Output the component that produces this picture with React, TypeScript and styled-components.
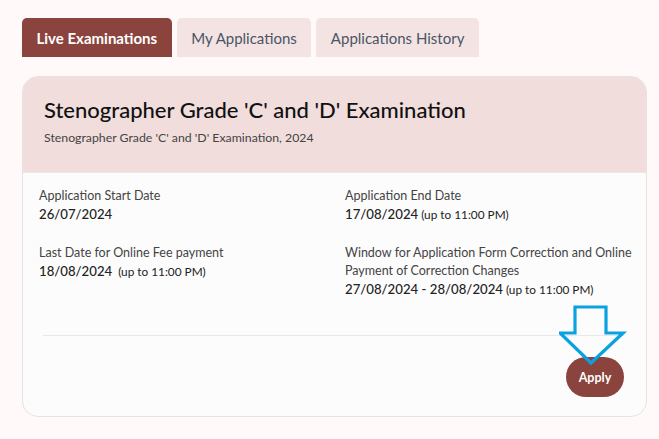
import React from "react";
import styled, { createGlobalStyle } from "styled-components";

const Global = createGlobalStyle`
  html, body { margin: 0; padding: 0; background: #fffaf9; }
  body { font-family: Lato, "Open Sans", sans-serif; }
  * { box-sizing: border-box; }
`;

const Page = styled.div`
  padding: 18px 12px 0 22px;
  width: 659px;
  height: 439px;
`;

const Tabs = styled.div`
  display: flex;
  gap: 5px;
  margin-bottom: 19px;
`;

const Tab = styled.div<{ $active?: boolean }>`
  height: 39px;
  padding: 0 14.5px;
  display: flex;
  align-items: center;
  border-radius: 5px 5px 0 0;
  font-size: 15px;
  font-weight: ${(p) => (p.$active ? 700 : 400)};
  color: ${(p) => (p.$active ? "#ffffff" : "#4b5565")};
  background: ${(p) => (p.$active ? "#8b433e" : "#f3e4e3")};
  white-space: nowrap;
`;

const Card = styled.div`
  width: 625px;
  height: 341px;
  border: 1px solid #e6e3e3;
  border-radius: 16px;
  background: #fcfcfc;
  overflow: hidden;
  display: flex;
  flex-direction: column;
`;

const Header = styled.div`
  background: #f0dddc;
  padding: 19px 21px 0;
  height: 96px;
  border-bottom: 1px solid #eee6e6;
`;

const Title = styled.h1`
  margin: 0;
  font-size: 22px;
  font-weight: 500;
  color: #111;
  line-height: 28px;
`;

const Subtitle = styled.div`
  margin-top: 6px;
  font-size: 12.3px;
  color: #444;
`;

const Body = styled.div`
  padding: 14px 10px 0 16px;
  display: grid;
  grid-template-columns: 306px 1fr;
  row-gap: 20px;
`;

const Field = styled.div``;

const Label = styled.div`
  font-size: 12.5px;
  color: #444;
  line-height: 18px;
  white-space: nowrap;
`;

const Value = styled.div`
  font-size: 13.2px;
  font-weight: 500;
  color: #222;
  line-height: 18px;
  white-space: nowrap;
`;

const Note = styled.span<{ $gap?: boolean }>`
  font-size: 11.8px;
  font-weight: 400;
  margin-left: ${(p) => (p.$gap ? 6 : 3)}px;
`;

const Divider = styled.hr`
  margin: 36px 22px 0 20px;
  border: none;
  border-top: 1px solid #e8e8e8;
`;

const Footer = styled.div`
  display: flex;
  justify-content: flex-end;
  padding: 21px 22px 0 0;
`;

const ApplyWrap = styled.div`
  position: relative;
`;

const ApplyButton = styled.button`
  width: 58px;
  height: 40px;
  border: none;
  border-radius: 20px;
  background: #8b433e;
  color: #fff;
  font-family: inherit;
  font-weight: 700;
  font-size: 12.5px;
  padding: 0;
`;

const Arrow = styled.svg`
  position: absolute;
  left: -7px;
  top: -52px;
  pointer-events: none;
`;

export default function App() {
  return (
    <>
      <Global />
      <Page>
        <Tabs>
          <Tab $active>Live Examinations</Tab>
          <Tab>My Applications</Tab>
          <Tab>Applications History</Tab>
        </Tabs>
        <Card>
          <Header>
            <Title>Stenographer Grade 'C' and 'D' Examination</Title>
            <Subtitle>Stenographer Grade 'C' and 'D' Examination, 2024</Subtitle>
          </Header>
          <Body>
            <Field>
              <Label>Application Start Date</Label>
              <Value>26/07/2024</Value>
            </Field>
            <Field>
              <Label>Application End Date</Label>
              <Value>
                17/08/2024<Note>(up to 11:00 PM)</Note>
              </Value>
            </Field>
            <Field>
              <Label>Last Date for Online Fee payment</Label>
              <Value>
                18/08/2024<Note $gap>(up to 11:00 PM)</Note>
              </Value>
            </Field>
            <Field>
              <Label>
                Window for Application Form Correction and Online
                <br />
                Payment of Correction Changes
              </Label>
              <Value>
                27/08/2024 - 28/08/2024<Note>(up to 11:00 PM)</Note>
              </Value>
            </Field>
          </Body>
          <Divider />
          <Footer>
            <ApplyWrap>
              <ApplyButton>Apply</ApplyButton>
              <Arrow width="70" height="62" viewBox="0 0 70 62">
                <path
                  d="M16 2 H47 V28 H64 L32 58 L1 28 H16 Z"
                  fill="none"
                  stroke="#0aa1e2"
                  strokeWidth="3.2"
                  strokeLinejoin="miter"
                />
              </Arrow>
            </ApplyWrap>
          </Footer>
        </Card>
      </Page>
    </>
  );
}
